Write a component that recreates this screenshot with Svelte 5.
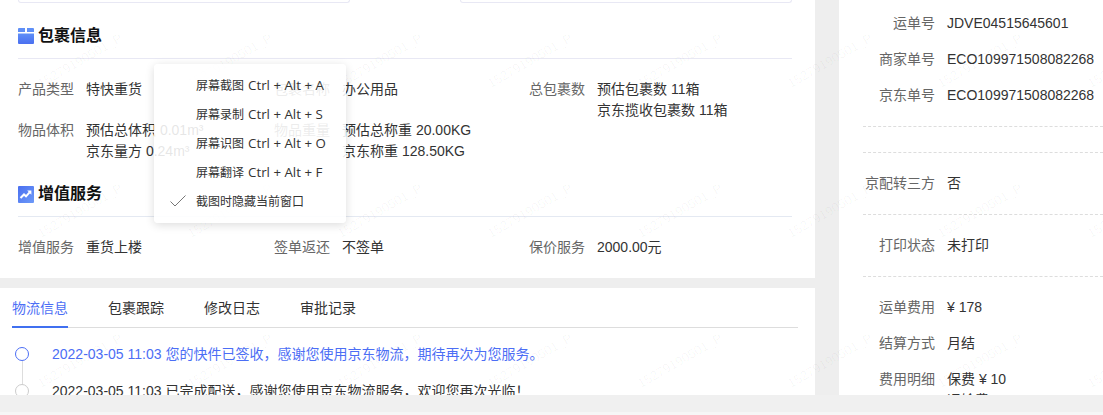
<script>
const parcelRows = [
  [
    { label: "产品类型", lines: ["特快重货"] },
    { label: "包裹名称", lines: ["办公用品"] },
    { label: "总包裹数", lines: ["预估包裹数 11箱", "京东揽收包裹数 11箱"] }
  ],
  [
    { label: "物品体积", lines: ["预估总体积 0.01m³", "京东量方 0.24m³"] },
    { label: "物品重量", lines: ["预估总称重 20.00KG", "京东称重 128.50KG"] }
  ]
]
const serviceRow = [
  { label: "增值服务", lines: ["重货上楼"] },
  { label: "签单返还", lines: ["不签单"] },
  { label: "保价服务", lines: ["2000.00元"] }
]
const tabs = ["物流信息", "包裹跟踪", "修改日志", "审批记录"]
const menu = [
  { text: "屏幕截图", keys: "Ctrl + Alt + A" },
  { text: "屏幕录制", keys: "Ctrl + Alt + S" },
  { text: "屏幕识图", keys: "Ctrl + Alt + O" },
  { text: "屏幕翻译", keys: "Ctrl + Alt + F" },
  { text: "截图时隐藏当前窗口", checked: true }
]
const sideGroups = [
  [["运单号", "JDVE04515645601"], ["商家单号", "ECO109971508082268"], ["京东单号", "ECO109971508082268"]],
  [],
  [["京配转三方", "否"]],
  [["打印状态", "未打印"]],
  [["运单费用", "¥ 178"], ["结算方式", "月结"], ["费用明细", "保费 ¥ 10"], ["", "运输费 ¥ 168"]]
]
const marks = []
for (let row = 0; row < 3; row++) {
  for (let col = 0; col < 8; col++) {
    marks.push({ x: 80 + col * 150, y: 61 + row * 150 })
  }
}
</script>

<div class="page">
  <div class="columns">
    <main class="left">
      <section class="card info">
        <div class="remnants"><div></div><div></div></div>

        <h2 class="heading first">
          <svg width="16" height="16" viewBox="0 0 16 16">
            <defs>
              <linearGradient id="boxfill" x1="0" y1="0" x2="0" y2="1">
                <stop offset="0" stop-color="#5f8ff7" />
                <stop offset="1" stop-color="#4a6ff0" />
              </linearGradient>
            </defs>
            <path d="M1 0h6v4H0V1a1 1 0 0 1 1-1zM9 0h6a1 1 0 0 1 1 1v3H9z" fill="#5f8ff7" />
            <path d="M0 5.5h16V15a1 1 0 0 1-1 1H1a1 1 0 0 1-1-1z" fill="url(#boxfill)" />
          </svg>
          包裹信息
        </h2>
        <div class="fields">
          {#each parcelRows as row}
            {#each row as f}
              <div class="field">
                <span class="label">{f.label}</span>
                <div class="value">{#each f.lines as l}<div>{l}</div>{/each}</div>
              </div>
            {/each}
            {#if row.length < 3}<div></div>{/if}
          {/each}
        </div>

        <h2 class="heading second">
          <svg width="16" height="17" viewBox="0 0 16 17">
            <defs>
              <linearGradient id="trendfill" x1="0" y1="0" x2="1" y2="1">
                <stop offset="0" stop-color="#4a6ff0" />
                <stop offset="1" stop-color="#6d9af8" />
              </linearGradient>
            </defs>
            <rect width="16" height="17" rx="1" fill="url(#trendfill)" />
            <path d="M2.5 12l3.5-3.5 2 1.8 3.6-4" fill="none" stroke="#fff" stroke-width="2" />
            <path d="M9.2 4.6h4.2v4.2z" fill="#fff" />
          </svg>
          增值服务
        </h2>
        <div class="fields">
          {#each serviceRow as f}
            <div class="field">
              <span class="label">{f.label}</span>
              <div class="value">{#each f.lines as l}<div>{l}</div>{/each}</div>
            </div>
          {/each}
        </div>
      </section>

      <section class="card logistics">
        <div class="tabs">
          {#each tabs as tab, i}
            <span class="tab" class:active={i === 0}>{tab}</span>
          {/each}
        </div>
        <div class="timeline">
          <div class="event current">
            <span class="dot"></span>
            <span>2022-03-05 11:03 您的快件已签收，感谢您使用京东物流，期待再次为您服务。</span>
          </div>
          <div class="event">
            <span class="dot"></span>
            <span>2022-03-05 11:03 已完成配送，感谢您使用京东物流服务，欢迎您再次光临！</span>
          </div>
        </div>
      </section>
    </main>

    <aside class="side">
      {#each sideGroups as group}
        <div class="group">
          {#each group as [k, v]}
            <div class="side-row">
              <span class="side-label">{k}</span>
              <span class="side-value">{v}</span>
            </div>
          {/each}
        </div>
      {/each}
    </aside>
  </div>

  <div class="marks">
    {#each marks as m}
      <span class="mark" style="left:{m.x}px;top:{m.y}px">15279190501_P</span>
    {/each}
  </div>

  <div class="context-menu">
    {#each menu as item}
      <div class="menu-item">
        <span class="tick">
          {#if item.checked}
            <svg width="16" height="12" viewBox="0 0 16 12">
              <path d="M0.5 6.5l4.5 4.5L15.5 0.5" fill="none" stroke="#777" stroke-width="1" />
            </svg>
          {/if}
        </span>
        <span>{item.text}</span>
        {#if item.keys}<span class="keys">{item.keys}</span>{/if}
      </div>
    {/each}
  </div>

  <div class="footer"></div>
</div>

<style>
:global(body) {
  background: #eee;
  overflow: hidden;
}
.page {
  position: relative;
  height: 415px;
  overflow: hidden;
  font-family: "Liberation Sans", "Noto Sans CJK SC", sans-serif;
  font-size: 14px;
  color: #333;
}
.columns {
  display: flex;
  gap: 24px;
  height: 415px;
}
.left {
  width: 815px;
  display: flex;
  flex-direction: column;
  gap: 10px;
}
.card {
  background: #fff;
}
.info {
  height: 278px;
  padding: 0 23px 0 18px;
  box-sizing: border-box;
}
.remnants {
  display: flex;
  justify-content: space-between;
}
.remnants div {
  width: 332px;
  height: 3px;
  box-sizing: border-box;
  border: 1px solid #e8e8f4;
  border-top: none;
  border-radius: 0 0 4px 4px;
}
.heading {
  display: flex;
  align-items: center;
  gap: 4px;
  margin: 0;
  font-size: 16px;
  line-height: 22px;
  font-weight: 700;
  color: #111;
  border-bottom: 1px solid #e8e8f4;
}
.heading.first {
  margin-top: 22px;
  padding-bottom: 11px;
}
.heading.second {
  margin-top: 22px;
  padding-bottom: 11px;
  border-bottom-color: #e4e9f2;
}
.fields {
  display: grid;
  grid-template-columns: 256px 255px 1fr;
  padding-top: 20px;
  line-height: 20.5px;
}
.field {
  display: flex;
  gap: 12px;
}
.label {
  color: #666;
  flex: none;
}
.logistics {
  height: 107px;
  padding: 0 17px 0 12px;
  overflow: hidden;
}
.tabs {
  display: flex;
  gap: 40px;
  border-bottom: 1px solid #ddd;
  height: 39px;
}
.tab {
  height: 38px;
  box-sizing: border-box;
  padding-top: 10px;
  line-height: 20px;
}
.tab.active {
  height: 40px;
  color: #4c6ef5;
  border-bottom: 2px solid #4070f0;
}
.timeline {
  padding: 16px 0 0 3px;
  position: relative;
}
.event {
  display: flex;
  align-items: center;
  gap: 23px;
  line-height: 20px;
  margin-bottom: 17px;
  position: relative;
}
.event.current {
  color: #4c6ef5;
}
.dot {
  width: 14px;
  height: 14px;
  box-sizing: border-box;
  border-radius: 50%;
  border: 1.5px solid #ccc;
  background: #fff;
  flex: none;
}
.current .dot {
  border-color: #4c6ef5;
}
.current::after {
  content: "";
  position: absolute;
  left: 6.5px;
  top: 17px;
  width: 1px;
  height: 24px;
  background: #ddd;
}
.side {
  flex: 1;
  background: #fff;
  padding: 5px 0 0 24px;
}
.group {
  border-bottom: 1px dashed #ddd;
  padding: 0;
}
.group:nth-child(1) {
  padding-bottom: 13px;
}
.group:nth-child(2) {
  height: 25px;
}
.group:nth-child(3),
.group:nth-child(4) {
  padding: 12px 0 13px;
}
.group:nth-child(5) {
  border-bottom: none;
  padding-top: 12px;
}
.side-row {
  display: flex;
  gap: 12px;
  height: 36px;
  line-height: 36px;
}
.group:nth-child(5) .side-row:last-child {
  height: 21px;
  line-height: 21px;
  margin-top: -7px;
}
.side-label {
  width: 72px;
  flex: none;
  text-align: right;
  color: #666;
}
.side-value {
  white-space: nowrap;
}
.marks {
  position: absolute;
  inset: 0;
  pointer-events: none;
}
.mark {
  position: absolute;
  transform: translate(-50%, -50%) rotate(-30deg);
  font-size: 13px;
  line-height: 16px;
  color: rgba(0, 0, 0, 0.04);
  white-space: nowrap;
}
.context-menu {
  position: absolute;
  left: 154px;
  top: 64px;
  width: 192px;
  height: 159px;
  box-sizing: border-box;
  padding: 7px 0;
  background: rgba(255, 255, 255, 0.88);
  border-radius: 4px;
  box-shadow: 0 2px 10px rgba(0, 0, 0, 0.14);
  font-family: "Open Sans", "Noto Sans CJK SC", sans-serif;
  font-size: 12px;
  color: #333;
}
.menu-item {
  display: flex;
  align-items: center;
  height: 28.8px;
  white-space: nowrap;
}
.tick {
  width: 42px;
  padding-left: 16px;
  box-sizing: border-box;
  flex: none;
  display: flex;
  align-items: center;
}
.keys {
  margin-left: 4px;
  font-size: 13.3px;
}
.footer {
  position: absolute;
  left: 0;
  right: 0;
  bottom: 0;
  height: 20px;
  box-sizing: border-box;
  background: #f0f0f0;
  border-bottom: 3px solid #f6f6f6;
}
</style>
